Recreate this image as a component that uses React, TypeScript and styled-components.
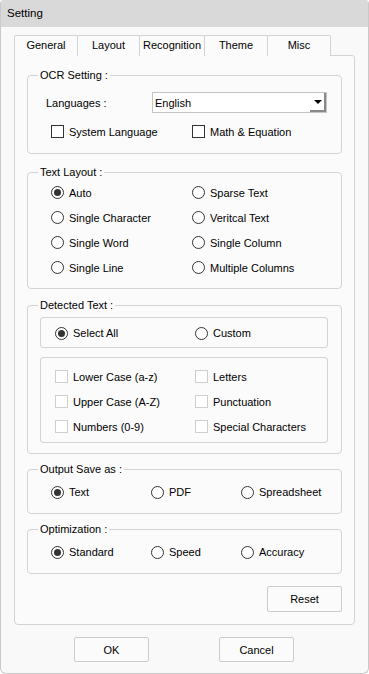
import React from 'react';
import styled, { createGlobalStyle } from 'styled-components';

const GlobalStyle = createGlobalStyle`
	html, body {
		margin: 0;
		padding: 0;
		background: #ffffff;
	}
	body {
		font-family: 'Liberation Sans', Arial, sans-serif;
		font-size: 11px;
		color: #000;
	}
`;

const Window = styled.div`
	box-sizing: border-box;
	width: 369px;
	height: 674px;
	display: flex;
	flex-direction: column;
	background: #f9f9f9;
	border: 1px solid #c9c9c9;
	border-top: none;
	border-radius: 4px 4px 6px 6px;
	overflow: hidden;
`;

const TitleBar = styled.div`
	height: 27px;
	line-height: 27px;
	padding-left: 6px;
	background: #d9d9d9;
	font-size: 11.5px;
`;

const Body = styled.div`
	padding: 8px 12px 0 13px;
`;

const TabBar = styled.div`
	display: flex;
	height: 20px;
`;

const Tab = styled.div<{ $w: number }>`
	box-sizing: border-box;
	width: ${(p) => p.$w}px;
	height: 21px;
	border: 1px solid #d3d3d3;
	border-bottom: none;
	border-radius: 2px 2px 0 0;
	background: #fbfbfb;
	text-align: center;
	line-height: 19px;
	margin-right: -1px;
`;

const Panel = styled.div`
	box-sizing: border-box;
	width: 341px;
	border: 1px solid #d3d3d3;
	border-radius: 0 3px 4px 4px;
	background: #fbfbfb;
	padding: 12px 12px 12px 12px;
	display: flex;
	flex-direction: column;
`;

const Group = styled.fieldset<{ $mt?: number }>`
	margin: ${(p) => p.$mt ?? 0}px 0 0 0;
	padding: 0;
	min-width: 0;
	border: 1px solid #d3d3d3;
	border-radius: 4px;
`;

const Legend = styled.legend`
	margin-left: 10px;
	padding: 0 2px;
	line-height: 14px;
	font-size: 11px;
`;

const GroupContent = styled.div<{ $pad: string }>`
	padding: ${(p) => p.$pad};
`;

const LangRow = styled.div`
	display: flex;
	align-items: center;
	height: 21px;
	padding-left: 18px;
`;

const LangLabel = styled.span`
	width: 106px;
`;

const Select = styled.div`
	box-sizing: border-box;
	width: 175px;
	height: 21px;
	display: flex;
	align-items: center;
	justify-content: space-between;
	background: #fff;
	border: 1px solid #c4c4c4;
	padding-left: 2px;
`;

const ArrowButton = styled.span`
	box-sizing: border-box;
	width: 16px;
	height: 19px;
	display: flex;
	align-items: center;
	justify-content: center;
	border-right: 2px solid #8a8a8a;
	border-bottom: 2px solid #8a8a8a;

	&::after {
		content: '';
		border-left: 4px solid transparent;
		border-right: 4px solid transparent;
		border-top: 4px solid #000;
		margin-left: 1px;
	}
`;

const Grid = styled.div<{ $cols: string; $row: number; $ml: number }>`
	display: grid;
	grid-template-columns: ${(p) => p.$cols};
	grid-auto-rows: ${(p) => p.$row}px;
	align-items: center;
	padding-left: ${(p) => p.$ml}px;
`;

const Option = styled.label`
	display: flex;
	align-items: center;
	gap: 5px;
	white-space: nowrap;
`;

const Box = styled.span<{ $disabled?: boolean }>`
	box-sizing: border-box;
	width: 13px;
	height: 13px;
	flex: none;
	background: #fff;
	border: 1px solid ${(p) => (p.$disabled ? '#cfcfcf' : '#333')};
`;

const Radio = styled.span<{ $on?: boolean }>`
	box-sizing: border-box;
	width: 13px;
	height: 13px;
	flex: none;
	border-radius: 50%;
	background: #fff;
	border: 1px solid #333;
	display: flex;
	align-items: center;
	justify-content: center;

	&::after {
		content: '';
		width: 7px;
		height: 7px;
		border-radius: 50%;
		background: ${(p) => (p.$on ? '#333' : 'transparent')};
	}
`;

const InnerBox = styled.div<{ $h: number; $mt: number; $pt: number }>`
	box-sizing: border-box;
	height: ${(p) => p.$h}px;
	margin-top: ${(p) => p.$mt}px;
	padding-top: ${(p) => p.$pt}px;
	border: 1px solid #d3d3d3;
	border-radius: 3px;
`;

const ButtonRow = styled.div<{ $justify: string }>`
	display: flex;
	justify-content: ${(p) => p.$justify};
`;

const Button = styled.button<{ $h: number }>`
	box-sizing: border-box;
	width: 75px;
	height: ${(p) => p.$h}px;
	background: #fbfbfb;
	border: 1px solid #cccccc;
	border-radius: 2px;
	font-family: inherit;
	font-size: 11px;
	color: #000;
	padding: 0;
`;

const Footer = styled.div`
	display: flex;
	gap: 70px;
	padding: 12px 0 0 60px;
`;

const Check = ({ label, disabled }: { label: string; disabled?: boolean }) => (
	<Option>
		<Box $disabled={disabled} />
		{label}
	</Option>
);

const RadioOpt = ({ label, on }: { label: string; on?: boolean }) => (
	<Option>
		<Radio $on={on} />
		{label}
	</Option>
);

const tabs: [string, number][] = [
	['General', 64],
	['Layout', 63],
	['Recognition', 66],
	['Theme', 64],
	['Misc', 64],
];

export default function App() {
	return (
		<>
			<GlobalStyle />
			<Window>
				<TitleBar>Setting</TitleBar>
				<Body>
					<TabBar>
						{tabs.map(([t, w]) => (
							<Tab key={t} $w={w}>{t}</Tab>
						))}
					</TabBar>
					<Panel>
						<Group>
							<Legend>OCR Setting :</Legend>
							<GroupContent $pad="10px 0 15px 0">
								<LangRow>
									<LangLabel>Languages :</LangLabel>
									<Select>
										<span>English</span>
										<ArrowButton />
									</Select>
								</LangRow>
								<Grid $cols="141px 1fr" $row={13} $ml={23} style={{ marginTop: 12 }}>
									<Check label="System Language" />
									<Check label="Math & Equation" />
								</Grid>
							</GroupContent>
						</Group>

						<Group $mt={11}>
							<Legend>Text Layout :</Legend>
							<GroupContent $pad="1px 0 8px 0">
								<Grid $cols="141px 1fr" $row={25} $ml={23}>
									<RadioOpt label="Auto" on />
									<RadioOpt label="Sparse Text" />
									<RadioOpt label="Single Character" />
									<RadioOpt label="Veritcal Text" />
									<RadioOpt label="Single Word" />
									<RadioOpt label="Single Column" />
									<RadioOpt label="Single Line" />
									<RadioOpt label="Multiple Columns" />
								</Grid>
							</GroupContent>
						</Group>

						<Group $mt={9}>
							<Legend>Detected Text :</Legend>
							<GroupContent $pad="5px 13px 10px 12px">
								<InnerBox $h={31} $mt={0} $pt={1}>
									<Grid $cols="140px 1fr" $row={28} $ml={14}>
										<RadioOpt label="Select All" on />
										<RadioOpt label="Custom" />
									</Grid>
								</InnerBox>
								<InnerBox $h={86} $mt={9} $pt={6}>
									<Grid $cols="140px 1fr" $row={25} $ml={14}>
										<Check label="Lower Case (a-z)" disabled />
										<Check label="Letters" disabled />
										<Check label="Upper Case (A-Z)" disabled />
										<Check label="Punctuation" disabled />
										<Check label="Numbers (0-9)" disabled />
										<Check label="Special Characters" disabled />
									</Grid>
								</InnerBox>
							</GroupContent>
						</Group>

						<Group $mt={8}>
							<Legend>Output Save as :</Legend>
							<GroupContent $pad="4px 0 9px 0">
								<Grid $cols="100px 90px 1fr" $row={24} $ml={23}>
									<RadioOpt label="Text" on />
									<RadioOpt label="PDF" />
									<RadioOpt label="Spreadsheet" />
								</Grid>
							</GroupContent>
						</Group>

						<Group $mt={8}>
							<Legend>Optimization :</Legend>
							<GroupContent $pad="4px 0 9px 0">
								<Grid $cols="100px 90px 1fr" $row={24} $ml={23}>
									<RadioOpt label="Standard" on />
									<RadioOpt label="Speed" />
									<RadioOpt label="Accuracy" />
								</Grid>
							</GroupContent>
						</Group>

						<ButtonRow $justify="flex-end" style={{ marginTop: 12 }}>
							<Button $h={26}>Reset</Button>
						</ButtonRow>
					</Panel>
					<Footer>
						<Button $h={25}>OK</Button>
						<Button $h={25}>Cancel</Button>
					</Footer>
				</Body>
			</Window>
		</>
	);
}
